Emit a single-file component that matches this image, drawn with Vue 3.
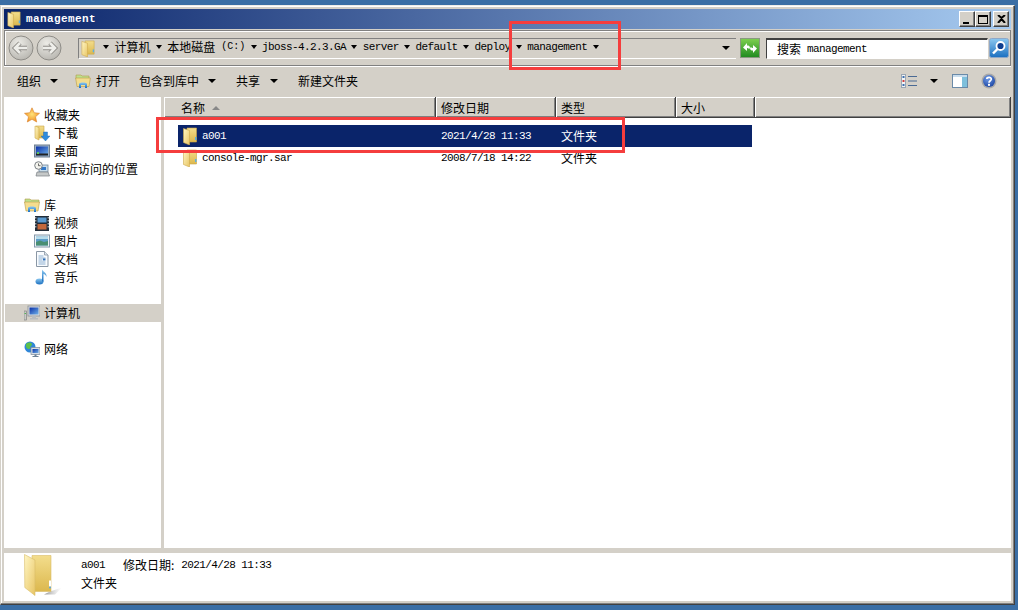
<script setup>
const crumbs = [
  { t: '计算机', cjk: true },
  { t: '本地磁盘', extra: '(C:)', cjk: true },
  { t: 'jboss-4.2.3.GA' },
  { t: 'server' },
  { t: 'default' },
  { t: 'deploy' },
  { t: 'management' }
]
const navGroups = [
  { items: [
    { t: '收藏夹', i: 'star', top: true },
    { t: '下载', i: 'download' },
    { t: '桌面', i: 'desktop' },
    { t: '最近访问的位置', i: 'recent' }
  ] },
  { items: [
    { t: '库', i: 'library', top: true },
    { t: '视频', i: 'video' },
    { t: '图片', i: 'picture' },
    { t: '文档', i: 'doc' },
    { t: '音乐', i: 'music' }
  ] },
  { items: [{ t: '计算机', i: 'computer', top: true, active: true }] },
  { items: [{ t: '网络', i: 'network', top: true }] }
]
const columns = [
  { t: '名称', w: 272, sort: true },
  { t: '修改日期', w: 120 },
  { t: '类型', w: 120 },
  { t: '大小', w: 79 }
]
const files = [
  { n: 'a001', d: '2021/4/28 11:33', k: '文件夹', sel: true },
  { n: 'console-mgr.sar', d: '2008/7/18 14:22', k: '文件夹' }
]
</script>

<template>
  <svg class="defs" aria-hidden="true">
    <defs>
      <linearGradient id="gFront" x1="0" y1="0" x2="1" y2="1">
        <stop offset="0" stop-color="#fff6c4" />
        <stop offset="1" stop-color="#e8c564" />
      </linearGradient>
      <linearGradient id="gBack" x1="0" y1="0" x2="0" y2="1">
        <stop offset="0" stop-color="#f3dd8c" />
        <stop offset="1" stop-color="#dcb84e" />
      </linearGradient>
      <linearGradient id="gShadow" x1="0" y1="0" x2="1" y2="0">
        <stop offset="0" stop-color="#777" stop-opacity=".8" />
        <stop offset="1" stop-color="#bbb" stop-opacity="0" />
      </linearGradient>
      <linearGradient id="gBlue" x1="0" y1="0" x2="0" y2="1">
        <stop offset="0" stop-color="#8cc8f0" />
        <stop offset="1" stop-color="#1a6fc0" />
      </linearGradient>
      <linearGradient id="gScreen" x1="0" y1="0" x2="1" y2="1">
        <stop offset="0" stop-color="#0a2fa8" />
        <stop offset="1" stop-color="#6fb0e8" />
      </linearGradient>
      <linearGradient id="gGreen" x1="0" y1="0" x2="0" y2="1">
        <stop offset="0" stop-color="#7fd050" />
        <stop offset="1" stop-color="#1f8a1f" />
      </linearGradient>
      <radialGradient id="gStar" cx=".5" cy=".45" r=".6">
        <stop offset="0" stop-color="#ffe27a" />
        <stop offset="1" stop-color="#f08a1c" />
      </radialGradient>
      <radialGradient id="gKnob" cx=".4" cy=".3" r=".8">
        <stop offset="0" stop-color="#ecebe6" />
        <stop offset="1" stop-color="#b4b2ac" />
      </radialGradient>
      <radialGradient id="gHelp" cx=".4" cy=".3" r=".8">
        <stop offset="0" stop-color="#6f9be8" />
        <stop offset="1" stop-color="#16409e" />
      </radialGradient>
    </defs>
    <symbol id="folder" viewBox="0 0 14 18">
      <path d="M4 1h9.500v14H4z" fill="url(#gBack)" stroke="#c9a648" stroke-width=".6" />
      <path d="M.5 1.500 6.500 3.500V18L.5 15.500z" fill="url(#gFront)" stroke="#cfa94c" stroke-width=".6" />
      <rect x="12" y="10" width="1.400" height="3" fill="#59b0e6" />
    </symbol>
    <symbol id="bigfolder" viewBox="0 0 38 42">
      <path d="M26 38 38 34 31 41H20z" fill="url(#gShadow)" />
      <path d="M8 2H27V38H8z" fill="url(#gBack)" stroke="#d8bc68" stroke-width=".6" />
      <path d="M.5 1 11 6.500V42L.8 34z" fill="url(#gFront)" stroke="#d8bc68" stroke-width=".6" />
      <rect x="25" y="27" width="2" height="6" fill="#fff" />
      <circle cx="26" cy="34" r="1" fill="#58a8e0" />
    </symbol>
    <symbol id="openfolder" viewBox="0 0 16 16">
      <path d="M1 4V2h5l1 1h7v3H1z" fill="#bde08c" stroke="#b49a48" stroke-width=".6" />
      <path d="M.6 5h14.800L14 13.500H2z" fill="#f2dc8e" stroke="#b99c46" stroke-width=".6" />
      <path d="M4 15V11c0-2 8-2 8 0v4H10V12H6v3z" fill="url(#gBlue)" />
    </symbol>
    <symbol id="star" viewBox="0 0 16 16">
      <path d="M8 .8 10.200 5.700 15.500 6.300 11.500 9.800 12.700 15 8 12.300 3.300 15 4.500 9.800.5 6.300 5.800 5.700z" fill="url(#gStar)" stroke="#d9822b" stroke-width=".6" />
    </symbol>
    <symbol id="download" viewBox="0 0 16 16">
      <path d="M2 1h8v12H2z" fill="url(#gBack)" stroke="#c9a648" stroke-width=".6" />
      <path d="M1 1 5 2.500V15L1 13z" fill="url(#gFront)" stroke="#cfa94c" stroke-width=".6" />
      <path d="M9.500 7h4v4H16l-4.500 5L7 11h2.500z" fill="#2f8bdc" stroke="#1b62ad" stroke-width=".4" />
    </symbol>
    <symbol id="desktop" viewBox="0 0 16 16">
      <rect x=".5" y="2" width="15" height="12" fill="#9cb0c6" stroke="#6e7f90" />
      <rect x="2" y="3.500" width="12" height="9" fill="url(#gScreen)" />
      <rect x="2" y="10.500" width="12" height="2" fill="#222" />
      <rect x="3" y="9" width="2" height="2" fill="#5cc05c" />
    </symbol>
    <symbol id="recent" viewBox="0 0 16 16">
      <rect x="5" y="4" width="9" height="7" fill="#c8ddec" stroke="#77889a" stroke-width=".8" />
      <rect x="7" y="6" width="5" height="3" fill="#3478c8" />
      <path d="M3 11h11l1.500 4H2z" fill="#c5c8c8" stroke="#7a7f85" stroke-width=".7" />
      <circle cx="4.500" cy="4.500" r="3.800" fill="#f4f4ee" stroke="#7a7f85" />
      <path d="M4.500 2.500v2.200h2" fill="none" stroke="#444" stroke-width=".8" />
    </symbol>
    <symbol id="library" viewBox="0 0 16 16">
      <path d="M1 4V2h5l1 1h8v3H1z" fill="#bde08c" stroke="#b49a48" stroke-width=".6" />
      <path d="M.5 5h15L14 14H2z" fill="#f5dd8e" stroke="#b99c46" stroke-width=".6" />
      <path d="M4 15V11c0-2 8-2 8 0v4H10V12H6v3z" fill="url(#gBlue)" />
    </symbol>
    <symbol id="video" viewBox="0 0 16 16">
      <rect x="1" y="1" width="14" height="15" fill="#222d3a" />
      <rect x="3.500" y="2.500" width="9" height="5" fill="#5a9ad0" />
      <rect x="3.500" y="9" width="9" height="5.500" fill="#c4683c" />
      <path d="M1.800 2v1.500M1.800 5v1.500M1.800 8v1.500M1.800 11v1.500M14.200 2v1.500M14.200 5v1.500M14.200 8v1.500M14.200 11v1.500" stroke="#ddd" />
    </symbol>
    <symbol id="picture" viewBox="0 0 16 16">
      <rect x=".5" y="2" width="15" height="12" fill="#eef2f5" stroke="#8398aa" />
      <rect x="2" y="3.500" width="12" height="9" fill="#5d9ec9" />
      <path d="M2 9 6 7.500 10 9l4-1v4.500H2z" fill="#4a8f73" />
      <rect x="2" y="3.500" width="12" height="2.500" fill="#b7dceb" />
    </symbol>
    <symbol id="doc" viewBox="0 0 16 16">
      <path d="M2.500 .5h8l3.500 3.500V15.500H2.500z" fill="#f8fbfe" stroke="#8a97a5" />
      <path d="M10.500.5V4H14" fill="#dde5ec" stroke="#8a97a5" stroke-width=".8" />
      <path d="M4.500 5h5M4.500 7h7M4.500 9h4M4.500 11h7M4.500 13h7" stroke="#8fb0d0" />
      <rect x="9" y="7.500" width="2.500" height="2" fill="#2f6fb8" />
    </symbol>
    <symbol id="music" viewBox="0 0 16 16">
      <ellipse cx="5.500" cy="12.500" rx="4" ry="3" fill="url(#gBlue)" />
      <path d="M8 12.500V.5c1 2.500 5 3 4.500 7.500-.5-2-2-3-3-3V12.500z" fill="url(#gBlue)" />
    </symbol>
    <symbol id="computer" viewBox="0 0 16 16">
      <rect x="4" y="1" width="12" height="10" fill="#d9dde0" stroke="#8a8f96" stroke-width=".8" />
      <rect x="5.500" y="2.500" width="9" height="7" fill="url(#gScreen)" />
      <path d="M8 11h4v2h2v1.500H6V13h2z" fill="#b8bcc0" />
      <rect x="0" y="6" width="2.500" height="9" fill="#c8ccc8" stroke="#777" stroke-width=".6" />
      <rect x=".6" y="8" width="1.300" height="1" fill="#48b048" />
    </symbol>
    <symbol id="network" viewBox="0 0 16 16">
      <circle cx="6" cy="6" r="5.500" fill="#2f86d8" />
      <path d="M2 3c2-2 5-2 6 0 0 2-2 2-2 4S3 8 2 6z" fill="#5cc04c" />
      <path d="M9 6c1 1 2 0 2 0v3H9z" fill="#5cc04c" />
      <rect x="7" y="6.500" width="9" height="7" fill="#d5dde5" stroke="#77889a" stroke-width=".7" />
      <rect x="8.500" y="8" width="6" height="4" fill="url(#gScreen)" />
      <path d="M10.500 13.500h2v1.500h2v1h-6v-1h2z" fill="#6d8296" />
    </symbol>
  </svg>

  <div class="desk">
    <div class="win">
      <header class="title">
        <svg class="i-title"><use href="#folder" /></svg>
        <span class="title-text">management</span>
        <div class="caption">
          <button class="cap"><i class="c-min"></i></button>
          <button class="cap"><i class="c-max"></i></button>
          <button class="cap close">
            <svg viewBox="0 0 9 8" width="9" height="8"><path d="M1 0 4.500 3 8 0M1 8l3.500-4L8 8" fill="none" stroke="#000" stroke-width="2" /></svg>
          </button>
        </div>
      </header>

      <div class="navbar">
        <div class="navkeys">
          <span class="knob">
            <svg viewBox="0 0 26 26" width="26" height="26">
              <circle cx="13" cy="13" r="12" fill="url(#gKnob)" stroke="#8f8d88" />
              <path d="M19 13H8M12 8 7 13l5 5" fill="none" stroke="#8f8d88" stroke-width="4.500" />
              <path d="M19 13H8M12 8 7 13l5 5" fill="none" stroke="#eeeeea" stroke-width="2.600" />
            </svg>
          </span>
          <span class="knob">
            <svg viewBox="0 0 26 26" width="26" height="26">
              <circle cx="13" cy="13" r="12" fill="url(#gKnob)" stroke="#8f8d88" />
              <path d="M7 13h11M14 8l5 5-5 5" fill="none" stroke="#8f8d88" stroke-width="4.500" />
              <path d="M7 13h11M14 8l5 5-5 5" fill="none" stroke="#eeeeea" stroke-width="2.600" />
            </svg>
          </span>
        </div>
        <div class="address">
          <svg class="i-addr"><use href="#folder" /></svg>
          <div class="crumbs">
            <i class="arrow small"></i>
            <template v-for="c in crumbs" :key="c.t">
              <span class="crumb">
                <span :class="c.cjk ? 'cjk' : 'latin'">{{ c.t }}</span>
                <span v-if="c.extra" class="latin paren">{{ c.extra }}</span>
              </span>
              <i class="arrow small"></i>
            </template>
          </div>
          <i class="arrow addr-drop"></i>
        </div>
        <span class="refresh">
          <svg viewBox="0 0 20 20" width="20" height="20">
            <rect x=".5" y=".5" width="19" height="19" fill="url(#gGreen)" stroke="#8a9a80" />
            <path d="M3 9.500 7 5v2.500c2 0 3 .5 3 3H8C8 10 7.500 10 7 10v3zM17 10.500 13 15v-2.500c-2 0-3-.5-3-3h2c0 .5.500.5 1 .5V7z" fill="#fff" />
          </svg>
        </span>
        <div class="search">
          <span class="cjk">搜索</span>
          <span class="latin">management</span>
        </div>
        <span class="searchbtn">
          <svg viewBox="0 0 20 20" width="20" height="20">
            <rect x=".5" y=".5" width="19" height="19" rx="2" fill="url(#gBlue)" stroke="#8ea8c8" />
            <circle cx="11.500" cy="8" r="4" fill="#0f3f90" stroke="#fff" stroke-width="1.800" />
            <path d="M8.500 11 4 15.500" stroke="#fff" stroke-width="2.400" />
          </svg>
        </span>
      </div>

      <div class="toolbar">
        <span class="tool first"><span class="cjk">组织</span><i class="arrow"></i></span>
        <span class="tool open"><svg class="i16"><use href="#openfolder" /></svg><span class="cjk">打开</span></span>
        <span class="tool lib"><span class="cjk">包含到库中</span><i class="arrow"></i></span>
        <span class="tool share"><span class="cjk">共享</span><i class="arrow"></i></span>
        <span class="tool newf"><span class="cjk">新建文件夹</span></span>
        <div class="tool-right">
          <svg class="i16" viewBox="0 0 16 16">
            <rect x=".5" y="1.500" width="4" height="13" fill="#f4f4f4" stroke="#9aa6b4" />
            <rect x="1.500" y="3" width="2" height="2" fill="#3a6fb0" />
            <rect x="1.500" y="7" width="2" height="2" fill="#d04040" />
            <rect x="1.500" y="11" width="2" height="2" fill="#3a6fb0" />
            <path d="M7 3.500h9M7 8h9M7 12.500h9" stroke="#4a6a94" />
          </svg>
          <i class="arrow view-drop"></i>
          <svg class="i16 pane-i" viewBox="0 0 16 16">
            <rect x=".5" y="1.500" width="15" height="13" fill="#fff" stroke="#6a8aa8" />
            <rect x="10" y="2" width="5" height="12" fill="#7ec0dc" />
            <rect x="1" y="2" width="14" height="2" fill="#c8dcec" />
          </svg>
          <svg class="i16" viewBox="0 0 16 16">
            <circle cx="8" cy="8" r="7.500" fill="#a8a8a8" />
            <circle cx="8" cy="8" r="6" fill="url(#gHelp)" />
            <path d="M5.800 6C6 3.800 10.500 3.800 10.300 6.200 10.200 7.800 8 7.800 8 9.800" fill="none" stroke="#fff" stroke-width="1.700" />
            <rect x="7" y="10.800" width="2" height="2" fill="#fff" />
          </svg>
        </div>
      </div>

      <div class="panes">
        <nav class="navpane">
          <div v-for="(g, gi) in navGroups" :key="gi" class="navgroup">
            <div
              v-for="it in g.items"
              :key="it.t"
              class="navrow"
              :class="{ top: it.top, active: it.active }"
            >
              <svg class="i16"><use :href="'#' + it.i" /></svg>
              <span class="cjk">{{ it.t }}</span>
            </div>
          </div>
        </nav>
        <main class="list">
          <div class="head">
            <div
              v-for="c in columns"
              :key="c.t"
              class="hcell"
              :class="{ first: c.sort }"
              :style="{ width: c.w + 'px' }"
            >
              <span class="cjk">{{ c.t }}</span>
              <i v-if="c.sort" class="sort"></i>
            </div>
            <div class="hcell fill"></div>
          </div>
          <div class="rows">
            <div v-for="f in files" :key="f.n" class="row" :class="{ sel: f.sel }">
              <div class="namecell">
                <svg class="i-file"><use href="#folder" /></svg>
                <span class="latin">{{ f.n }}</span>
              </div>
              <span class="latin">{{ f.d }}</span>
              <span class="cjk">{{ f.k }}</span>
            </div>
          </div>
        </main>
      </div>

      <footer class="details">
        <svg class="i-big"><use href="#bigfolder" /></svg>
        <div class="meta">
          <div class="meta-line">
            <span class="latin name">a001</span>
            <span class="cjk">修改日期:</span>
            <span class="latin date">2021/4/28 11:33</span>
          </div>
          <div class="meta-line"><span class="cjk">文件夹</span></div>
        </div>
      </footer>

      <div class="mark mark-path"></div>
      <div class="mark mark-row"></div>
    </div>
  </div>
</template>

<style>
html, body { margin: 0; background: #3a6ea5; overflow: hidden; }
</style>

<style scoped>
* { box-sizing: border-box; }
.defs { position: absolute; width: 0; height: 0; overflow: hidden; }
.desk { width: 1018px; height: 610px; padding-top: 5px; background: #3a6ea5; }
.win {
  position: relative;
  width: 1015px; height: 600px;
  padding: 3px 3px 3px 3px;
  display: flex; flex-direction: column;
  background: #d4d0c8;
  border: 1px solid;
  border-color: #efeee9 #404040 #404040 #d4d0c8;
  box-shadow: inset -1px -1px 0 #808080, inset 1px 1px 0 #fff;
  color: #000;
  font-family: "Noto Sans CJK SC", sans-serif;
  font-size: 12px;
}
.cjk { font-family: "Noto Sans CJK SC", sans-serif; font-size: 12px; line-height: 14px; white-space: nowrap; }
.latin {
  font-family: "Liberation Mono", monospace;
  font-size: 11px; letter-spacing: -.6px;
  line-height: 14px; white-space: nowrap;
}

.title {
  height: 20px; flex: none; margin-bottom: 1px;
  display: flex; align-items: center;
  padding: 0 2px 0 3px;
  background: linear-gradient(90deg, #0a246a, #a6caf0);
}
.i-title { width: 14px; height: 17px; flex: none; }
.title-text {
  margin-left: 5px;
  font-family: "Liberation Mono", monospace;
  font-size: 11px; font-weight: 700; letter-spacing: .4px; color: #fff;
}
.caption { margin-left: auto; display: flex; }
.cap {
  width: 16px; height: 16px; padding: 0;
  display: flex; align-items: center; justify-content: center;
  background: #d4d0c8;
  border: 1px solid; border-color: #fff #404040 #404040 #fff;
  box-shadow: inset -1px -1px 0 #808080;
}
.close { margin-left: 2px; }
.c-min { width: 6px; height: 2px; background: #000; margin-top: 7px; margin-right: 2px; }
.c-max { width: 10px; height: 9px; border: 1px solid #000; border-top-width: 2px; }

.navbar {
  height: 36px; flex: none;
  display: flex; align-items: center;
  padding: 0 2px 0 3px;
  border: 1px solid #808080;
  box-shadow: inset 1px 1px 0 #fff, 0 1px 0 #fff;
}
.navkeys { display: flex; gap: 2px; width: 70px; flex: none; }
.knob { display: block; width: 26px; height: 26px; }
.address {
  width: 658px; height: 21px; flex: none;
  display: flex; align-items: center;
  padding: 0 6px 0 2px;
  border-top: 1px solid #808080;
  border-left: 1px solid #808080;
  border-bottom: 1px solid #fff;
}
.i-addr { width: 14px; height: 17px; flex: none; }
.crumbs { display: flex; align-items: center; margin: -2px 0 0 8px; gap: 5.400px; }
.crumb { display: inline-flex; gap: 6px; }
.paren { letter-spacing: 0; font-size: 10px; }
.addr-drop { margin-left: auto; }
.arrow {
  display: inline-block; flex: none;
  width: 0; height: 0;
  border-left: 4px solid transparent; border-right: 4px solid transparent;
  border-top: 4px solid #000;
}
.arrow.small { border-left-width: 3px; border-right-width: 3px; }
.refresh { width: 20px; height: 20px; margin-left: 4px; flex: none; }
.search {
  width: 222px; height: 21px; margin-left: 6px; flex: none;
  display: flex; align-items: center; gap: 6px;
  padding-left: 10px;
  background: #fff;
  border: 1px solid; border-color: #404040 #fff #fff #404040;
  border-top-width: 2px;
}
.searchbtn { width: 20px; height: 20px; margin-left: 1px; flex: none; }

.toolbar {
  height: 31px; flex: none;
  display: flex; align-items: center;
  padding: 0 0 1px 13px;
}
.tool { display: flex; align-items: center; flex: none; }
.first { gap: 9px; }
.open { margin-left: 17px; gap: 5px; }
.lib { margin-left: 19px; gap: 9px; }
.share { margin-left: 20px; gap: 10px; }
.newf { margin-left: 20px; }
.i16 { width: 16px; height: 16px; flex: none; display: block; }
.tool-right { margin-left: auto; margin-right: 14px; display: flex; align-items: center; }
.view-drop { margin-left: 13px; }
.pane-i { margin-left: 14px; margin-right: 13px; }

.panes { flex: 1; min-height: 0; display: flex; gap: 3px; }
.navpane { width: 157px; flex: none; background: #fff; padding: 9px 0 0 1px; }
.navgroup { margin-bottom: 18px; }
.navrow {
  height: 18px;
  display: flex; align-items: center; gap: 4px;
  padding-left: 29px;
}
.navrow.top { padding-left: 19px; gap: 4px; }
.navrow.active { background: #d4d0c8; }

.list { flex: 1; min-width: 0; background: #fff; }
.head { height: 21px; display: flex; }
.hcell {
  flex: none; height: 21px;
  display: flex; align-items: center;
  padding: 2px 0 0 5px;
  background: #d4d0c8;
  border-right: 1px solid #404040;
  border-bottom: 1px solid #404040;
  box-shadow: inset 1px 1px 0 #fff, inset -1px -1px 0 #808080;
}
.hcell.first { padding-left: 17px; }
.hcell.fill { flex: 1; }
.sort {
  display: block; flex: none;
  width: 8px; height: 4px; margin: 0 0 0 -2px;
  background: #888;
  clip-path: polygon(50% 0, 100% 100%, 0 100%);
}
.rows { padding: 7px 0 0 14px; }
.row {
  width: 574px; height: 22px;
  display: grid; grid-template-columns: 263px 120px 1fr; align-items: center;
}
.row.sel { background: #0a246a; color: #fff; }
.namecell { display: flex; align-items: center; gap: 5px; padding-left: 5px; }
.i-file { width: 14px; height: 18px; flex: none; }

.details {
  height: 48px; flex: none; margin-top: 5px;
  display: flex;
  background: #fff;
  padding-left: 20px;
}
.i-big { width: 38px; height: 43px; flex: none; }
.meta { margin-left: 19px; padding-top: 3px; }
.meta-line { height: 18px; display: flex; align-items: center; }
.name { width: 42px; }
.date { margin-left: 7px; }

.mark { position: absolute; border: 3px solid #f53d3d; pointer-events: none; }
.mark-path { left: 508px; top: 15px; width: 112px; height: 49px; }
.mark-row { left: 155px; top: 111px; width: 469px; height: 36px; }
</style>
